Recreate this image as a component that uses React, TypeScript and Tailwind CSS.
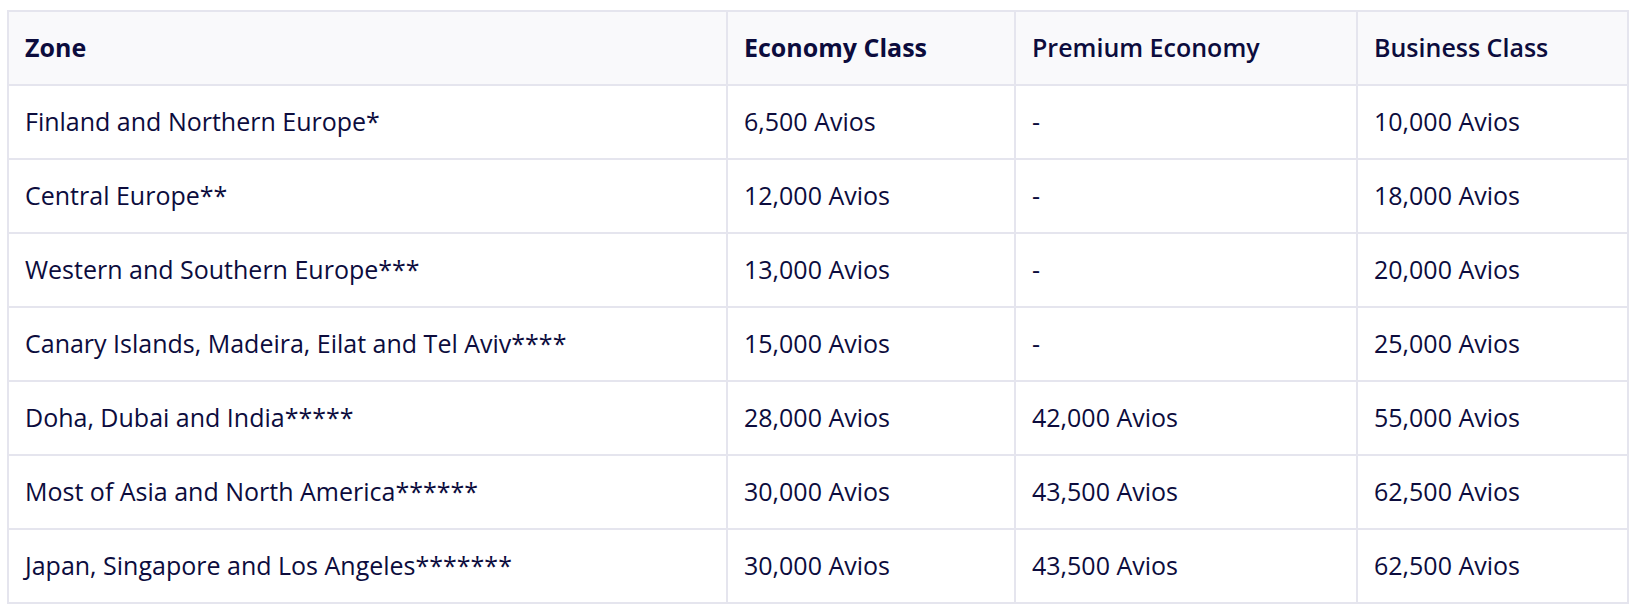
const rows: [string, string, string, string][] = [
  ["Finland and Northern Europe*", "6,500 Avios", "-", "10,000 Avios"],
  ["Central Europe**", "12,000 Avios", "-", "18,000 Avios"],
  ["Western and Southern Europe***", "13,000 Avios", "-", "20,000 Avios"],
  ["Canary Islands, Madeira, Eilat and Tel Aviv****", "15,000 Avios", "-", "25,000 Avios"],
  ["Doha, Dubai and India*****", "28,000 Avios", "42,000 Avios", "55,000 Avios"],
  ["Most of Asia and North America******", "30,000 Avios", "43,500 Avios", "62,500 Avios"],
  ["Japan, Singapore and Los Angeles*******", "30,000 Avios", "43,500 Avios", "62,500 Avios"],
];

export default function App() {
  return (
    <div className="min-h-screen bg-white pl-[7px] pt-[10px] font-['Open_Sans',sans-serif] text-[#0c0c3d]">
      <table className="w-[1620px] table-fixed border-collapse border-2 border-[#e5e5ee]">
        <colgroup>
          <col className="w-[719px]" />
          <col className="w-[288px]" />
          <col className="w-[342px]" />
          <col className="w-[271px]" />
        </colgroup>
        <thead>
          <tr className="h-[74px] bg-[#f9f9fb]">
            <th className="border-2 border-[#e5e5ee] pl-[16px] text-left text-[25px] font-bold">Zone</th>
            <th className="border-2 border-[#e5e5ee] pl-[16px] text-left text-[25px] font-bold">Economy Class</th>
            <th className="border-2 border-[#e5e5ee] pl-[16px] text-left text-[25px] font-semibold">Premium Economy</th>
            <th className="border-2 border-[#e5e5ee] pl-[16px] text-left text-[25px] font-semibold">Business Class</th>
          </tr>
        </thead>
        <tbody>
          {rows.map((r) => (
            <tr key={r[0]} className="h-[74px]">
              {r.map((c, i) => (
                <td key={i} className="border-2 border-[#e5e5ee] pl-[16px] text-[25px]">
                  {c}
                </td>
              ))}
            </tr>
          ))}
        </tbody>
      </table>
    </div>
  );
}
